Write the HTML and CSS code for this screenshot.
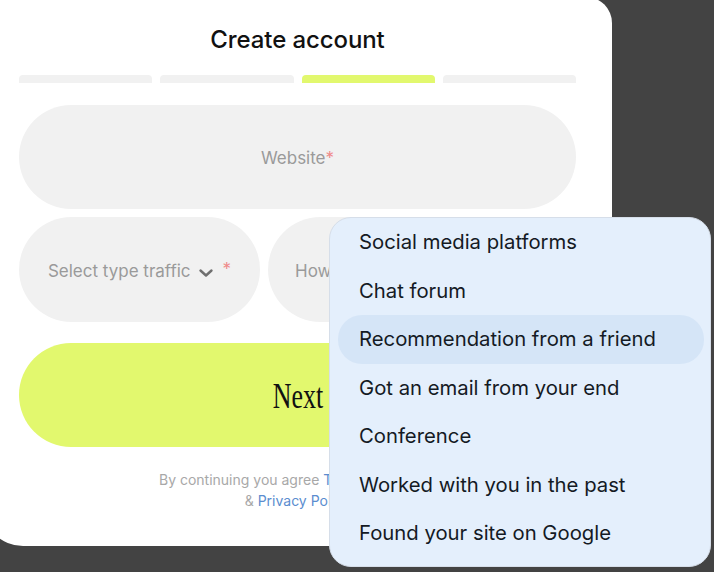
FILE: index.html
```html
<!DOCTYPE html>
<html lang="en">
<head>
<meta charset="utf-8">
<title>Create account</title>
<link rel="stylesheet" href="styles.css">
</head>
<body>
<div class="card">
  <h1 class="title">Create account</h1>
  <div class="steps">
    <span class="step"></span>
    <span class="step"></span>
    <span class="step active"></span>
    <span class="step"></span>
  </div>
  <div class="field wide">Website<span class="req">*</span></div>
  <div class="row">
    <div class="field select">Select type traffic
      <svg class="chev" width="16" height="10" viewBox="0 0 16 10"><path d="M2.5 2.5 L8 7.5 L13.5 2.5" fill="none" stroke="#6f6f6f" stroke-width="2.4" stroke-linecap="round" stroke-linejoin="round"/></svg>
      <span class="req">*</span></div>
    <div class="field how">How did you hear about us</div>
  </div>
  <button class="next"><span>Next</span></button>
  <p class="terms">By continuing you agree <a href="#">Terms of Service</a><br>&amp; <a href="#">Privacy Policy</a></p>
</div>
<ul class="menu">
  <li>Social media platforms</li>
  <li>Chat forum</li>
  <li class="hover">Recommendation from a friend</li>
  <li>Got an email from your end</li>
  <li>Conference</li>
  <li>Worked with you in the past</li>
  <li>Found your site on Google</li>
</ul>
</body>
</html>
```
FILE: styles.css
```css
html, body { margin: 0; padding: 0; }
body {
  background: #434343;
  width: 714px;
  height: 572px;
  overflow: hidden;
  position: relative;
  font-family: Inter, "Noto Sans", sans-serif;
}
.card {
  background: #fff;
  width: 557px;
  margin: -3px 0 0 -17px;
  padding: 29px 36px 35px 36px;
  border-radius: 0 26px 0 40px;
}
.title {
  margin: 0;
  text-align: center;
  font-size: 24px;
  line-height: 28px;
  font-weight: 500;
  color: #111;
  letter-spacing: -0.1px;
}
.steps {
  display: flex;
  gap: 8px;
  margin-top: 21px;
}
.step {
  flex: 1;
  height: 8px;
  border-radius: 4px 4px 0 0;
  background: #f1f1f1;
}
.step.active { background: #e2f86e; }
.field {
  background: #f1f1f1;
  border-radius: 60px;
  height: 104px;
  display: flex;
  align-items: center;
  color: #9a9a9a;
  font-size: 17px;
  white-space: nowrap;
  overflow: hidden;
}
.wide { margin-top: 22px; justify-content: center; padding-top: 2px; box-sizing: border-box; }
.req { color: #ef8a8a; }
.row {
  display: flex;
  gap: 8px;
  margin-top: 8px;
}
.select { width: 241px; height: 105px; flex: none; justify-content: center; gap: 0; padding-top: 2px; box-sizing: border-box; }
.select .chev { margin: 4px 0 0 7px; }
.select .req { margin-left: 9px; margin-top: -4px; }
.how { flex: 1; height: 105px; padding-left: 27px; padding-top: 2px; box-sizing: border-box; }
.next {
  display: flex;
  align-items: center;
  justify-content: center;
  width: 100%;
  height: 104px;
  margin-top: 21px;
  border: 0;
  border-radius: 60px;
  background: #e2f86e;
  cursor: pointer;
}
.next span {
  display: inline-block;
  font-family: "Liberation Serif", "DejaVu Serif", serif;
  font-size: 36px;
  color: #111;
  transform: scaleX(0.72);
  margin-top: 2px;
}
.terms {
  margin: 22px 0 0;
  text-align: center;
  font-size: 14px;
  line-height: 21px;
  color: #a8a8a8;
}
.terms a { color: #5b8dcf; text-decoration: none; }
.menu {
  position: absolute;
  left: 329px;
  top: 217px;
  width: 366px;
  margin: 0;
  padding: 0 6px 8px 8px;
  list-style: none;
  background: #e4effc;
  border: 1px solid #d6dee9;
  border-radius: 22px;
  box-sizing: content-box;
}
.menu li {
  height: 48.5px;
  line-height: 48px;
  padding-left: 21px;
  font-size: 20.3px;
  color: #141a24;
  border-radius: 24px;
}
.menu li.hover { background: #d5e5f7; }
```
